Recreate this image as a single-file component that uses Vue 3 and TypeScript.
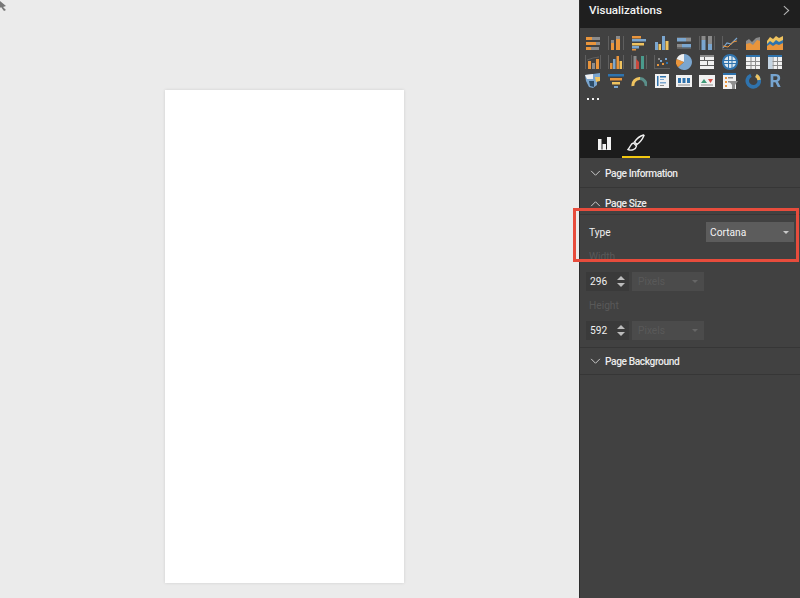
<script setup lang="ts">
interface Shape { d: string; fill: string; stroke: string; sw: number }
interface Icon { name: string; shapes: Shape[]; letter?: string }

const O = '#e9953c'
const B = '#7ba6cf'
const Y = '#efc35f'
const G = '#8b8b8b'
const D = '#5f5f5f'
const W = '#f1f1f1'
const N = '#2f73ad'

const r = (x: number, y: number, w: number, h: number, c: string): Shape => ({
  d: `M${x} ${y}h${w}v${h}h${-w}z`, fill: c, stroke: 'none', sw: 0,
})
const s = (d: string, c: string, sw = 1.2): Shape => ({ d, fill: 'none', stroke: c, sw })
const f = (d: string, c: string): Shape => ({ d, fill: c, stroke: 'none', sw: 0 })
const frame = (c = D): Shape[] => [r(0, 1, 1, 14, c), r(15, 1, 1, 14, c)]
const sheet: Shape = r(1, 1, 14, 14, W)
const gridLines = (top: string): Shape[] => [
  sheet, r(1, 1, 14, 2, top), r(5.5, 3, 1, 12, G), r(10, 3, 1, 12, G), r(1, 7, 14, 1, G), r(1, 11, 14, 1, G),
]

const icons: Icon[] = [
  { name: 'stacked bar', shapes: [r(1, 2, 6, 3, O), r(7, 2, 8, 3, G), r(1, 7, 10, 3, O), r(11, 7, 4, 3, G), r(1, 12, 5, 3, O), r(6, 12, 8, 3, G)] },
  { name: 'stacked column', shapes: [...frame(), r(3, 8, 3, 7, O), r(3, 5, 3, 3, G), r(8, 4, 4, 11, O), r(8, 1, 4, 3, G)] },
  { name: 'clustered bar', shapes: [r(1, 1, 9, 2.5, O), r(1, 4, 14, 2.5, B), r(1, 8, 12, 2.5, Y), r(1, 11, 7, 2.5, B), r(1, 14, 4, 1.5, O)] },
  { name: 'clustered column', shapes: [r(1, 7, 3, 8, B), r(4.5, 9, 2.5, 6, Y), r(8, 1, 3, 14, B), r(11.5, 6, 3, 9, Y)] },
  { name: '100% bar', shapes: [r(1, 2, 14, 1, D), r(1, 3, 9, 3.5, B), r(10, 3, 5, 3.5, G), r(1, 9, 5, 3.5, G), r(6, 9, 9, 3.5, B), r(1, 13, 14, 1, D)] },
  { name: '100% column', shapes: [...frame(), r(2.5, 1, 4, 4, G), r(2.5, 5, 4, 10, B), r(9, 1, 4, 8, G), r(9, 9, 4, 6, B)] },
  { name: 'line', shapes: [r(0, 1, 1, 14, D), r(0, 14, 16, 1, D), s('M1 13L5 8L9 9L15 3', B), s('M1 11L6 12L11 7L15 6', O, 1)] },
  { name: 'area', shapes: [f('M1 15V6L4 4L7 7L11 3L15 2V15z', G), f('M1 15V9L5 8L8 10L12 5L15 6V15z', O)] },
  { name: 'stacked area', shapes: [f('M0 6L3 2L6 4L9 1L12 3L16 1V9H0z', Y), f('M0 9L3 6L6 8L9 5L12 7L16 5V11H0z', N), f('M0 11L3 9L6 11L9 9L12 10L16 8V15H0z', O)] },

  { name: 'line and stacked', shapes: [...frame(), r(3, 7, 3, 8, O), r(7, 9, 3, 6, G), r(11, 5, 3, 10, O), s('M2 6L8 4L14 3', D, 1)] },
  { name: 'line and clustered', shapes: [...frame(), r(2, 9, 2.5, 6, O), r(5, 5, 2.5, 10, B), r(8.5, 2, 2.5, 13, O), r(11.5, 7, 2.5, 8, Y)] },
  { name: 'ribbon', shapes: [...frame(), r(2.5, 2, 3, 13, G), f('M5 5L8 8V15H5z', '#c9483c'), r(10, 2, 3, 13, '#4a9a8c')] },
  { name: 'scatter', shapes: [r(0, 1, 1, 14, D), r(0, 14, 16, 1, D), r(3, 10, 2, 2, O), r(6, 6, 2, 2, B), r(8, 9, 2, 2, O), r(11, 4, 2, 2, B), r(12, 8, 2, 2, N), r(4, 4, 2, 2, G)] },
  { name: 'pie', shapes: [f('M8 8V0A8 8 0 1 1 2 13.3z', B), f('M8 8L2 13.3A8 8 0 0 1 0.6 5z', O), f('M8 8L0.6 5A8 8 0 0 1 8 0z', W)] },
  { name: 'treemap', shapes: [sheet, r(1, 1, 14, 2, G), r(1, 6, 14, 1, D), r(8, 6, 1, 5, D), r(1, 11, 14, 1, D), r(5, 3, 1, 3, D)] },
  { name: 'globe', shapes: [f('M8 0a8 8 0 1 0 .01 0z', N), f('M8 2a6 6 0 1 0 .01 0z', '#d9e6ef'), r(2, 6, 12, 1, N), r(2, 9, 12, 1, N), r(6, 2, 1, 12, N), r(9.5, 2, 1, 12, N)] },
  { name: 'table', shapes: gridLines(N) },
  { name: 'matrix', shapes: [...gridLines(N), r(1, 3, 4.5, 12, '#c4d4e2')] },

  { name: 'filled map', shapes: [f('M0 2L8 1L15 0V5L12 7V12L8 15L4 14L1 8z', B), f('M0 2L8 1V6L2 6z', W), f('M4 8H9V14L5 13z', '#2c4c68'), f('M10 4H15V8L11 9z', Y)] },
  { name: 'funnel', shapes: [r(0, 1, 16, 2.5, N), r(2, 5, 12, 2.5, O), r(4, 9, 8, 2.5, Y), r(6, 13, 4, 2, B)] },
  { name: 'gauge', shapes: [s('M2 13A6.5 6.5 0 0 1 9 5.6', Y, 3), s('M9 5.6A6.5 6.5 0 0 1 15 13', '#5a8f8a', 3)] },
  { name: 'multi row card', shapes: [sheet, r(3, 3, 1.5, 10, N), r(6, 3, 6, 1.5, N), r(6, 6, 4, 1, B), r(6, 9, 6, 1.5, B), r(6, 12, 4, 1, G)] },
  { name: 'card', shapes: [r(0, 2, 16, 12, W), r(2, 5, 3, 5, N), r(6.5, 5, 3, 5, N), r(11, 5, 3, 5, N), r(2, 11.5, 12, 1, G)] },
  { name: 'kpi', shapes: [r(0, 2, 16, 12, W), f('M2 10L5 6L8 10z', '#3f9a78'), f('M9 6H14L11.5 10z', '#d24f45'), r(2, 11.5, 12, 1, G)] },
  { name: 'slicer', shapes: [r(1, 0, 13, 16, W), r(1, 0, 13, 2, N), r(3, 4, 2, 2, O), r(6, 4, 5, 1.5, G), r(3, 8, 2, 2, O), r(6, 8, 3, 1.5, G), r(3, 12, 2, 2, O), f('M7 8H16L13 12V16H10V12z', '#8f8f8f')] },
  { name: 'donut', shapes: [s('M10.8 2.4A6 6 0 1 1 6 2.3', N, 3.6), s('M11 2.5A6 6 0 0 1 14 7', Y, 3.2)] },
  { name: 'r script', shapes: [], letter: 'R' },
  { name: 'more', shapes: [r(2, 7, 2, 2, W), r(7, 7, 2, 2, W), r(12, 7, 2, 2, W)] },
]
</script>

<template>
  <div class="screen">
    <main class="canvas">
      <svg class="cursor" viewBox="0 0 8 11" width="8" height="11" aria-hidden="true">
        <path d="M0 1L6 6L3 7L6 10L4 11L1 7L0 8z" fill="#777" />
      </svg>
      <div class="page"></div>
    </main>

    <aside class="panel">
      <header class="title-bar">
        <span class="title">Visualizations</span>
        <svg viewBox="0 0 8 12" width="7" height="11" aria-hidden="true">
          <path d="M1 1L6.5 6L1 11" fill="none" stroke="#b5b5b5" stroke-width="1.2" />
        </svg>
      </header>

      <section class="gallery">
        <div v-for="icon in icons" :key="icon.name" class="tile" :title="icon.name">
          <span v-if="icon.letter" class="letter">{{ icon.letter }}</span>
          <svg v-else viewBox="0 0 16 16" width="16" height="16" aria-hidden="true">
            <path
              v-for="(p, i) in icon.shapes"
              :key="i"
              :d="p.d"
              :fill="p.fill"
              :stroke="p.stroke"
              :stroke-width="p.sw"
            />
          </svg>
        </div>
      </section>

      <nav class="tabs">
        <button class="tab" type="button" aria-label="Fields">
          <svg viewBox="0 0 13 13" width="13" height="13" aria-hidden="true">
            <path d="M0 2H3.500V13H0zM4.500 7H8V13H4.500zM9 0H13V13H9z" fill="#f2f2f2" />
            <path d="M0 12.500H13V13H0z" fill="#f2f2f2" />
          </svg>
        </button>
        <button class="tab active" type="button" aria-label="Format">
          <svg viewBox="0 0 18 18" width="18" height="18" aria-hidden="true">
            <path d="M16.500 1C13 2 9.500 5 7.500 8L10 10.500C13 8.500 15.500 5 17 1.500z" fill="none" stroke="#f2f2f2" stroke-width="1.400" />
            <path d="M6.500 9C3.500 9.500 3.500 13 1 15.500C4.500 17 9 15.500 9.500 12z" fill="none" stroke="#f2f2f2" stroke-width="1.400" />
          </svg>
        </button>
      </nav>

      <section class="section-head first">
        <svg class="chev" viewBox="0 0 12 8" width="11" height="7" aria-hidden="true">
          <path d="M1 1L6 6L11 1" fill="none" stroke="#cfcfcf" stroke-width="1.100" />
        </svg>
        <span>Page Information</span>
      </section>

      <section class="section-head open">
        <svg class="chev" viewBox="0 0 12 8" width="11" height="7" aria-hidden="true">
          <path d="M1 7L6 2L11 7" fill="none" stroke="#cfcfcf" stroke-width="1.100" />
        </svg>
        <span>Page Size</span>
      </section>

      <div class="type-row">
        <span>Type</span>
        <div class="select">
          <span>Cortana</span>
          <i class="caret"></i>
        </div>
      </div>

      <div class="label dim">Width</div>
      <div class="size-row">
        <div class="spin">
          <span class="num">296</span>
          <span class="arrows"><i class="up"></i><i class="down"></i></span>
        </div>
        <div class="unit"><span>Pixels</span><i class="caret off"></i></div>
      </div>

      <div class="label dim">Height</div>
      <div class="size-row">
        <div class="spin">
          <span class="num">592</span>
          <span class="arrows"><i class="up"></i><i class="down"></i></span>
        </div>
        <div class="unit"><span>Pixels</span><i class="caret off"></i></div>
      </div>

      <section class="section-head last">
        <svg class="chev" viewBox="0 0 12 8" width="11" height="7" aria-hidden="true">
          <path d="M1 1L6 6L11 1" fill="none" stroke="#cfcfcf" stroke-width="1.100" />
        </svg>
        <span>Page Background</span>
      </section>

      <div class="callout"></div>
    </aside>
  </div>
</template>

<style>
html, body { margin: 0; padding: 0; }
</style>

<style scoped>
.screen {
  display: flex;
  width: 800px;
  height: 598px;
  overflow: hidden;
  font-family: "Roboto", "Liberation Sans", sans-serif;
  background: #ebebeb;
}
.canvas {
  position: relative;
  flex: 0 0 579px;
  box-sizing: border-box;
  padding: 90px 175px 0 165px;
}
.cursor { position: absolute; left: 0; top: 0; }
.page {
  width: 239px;
  height: 493px;
  background: #fff;
  box-shadow: 0 0 3px rgba(0, 0, 0, 0.12);
}
.panel {
  position: relative;
  flex: 1;
  display: flex;
  flex-direction: column;
  background: #414141;
  border-left: 1px solid #2c2c2c;
  color: #f0f0f0;
  font-size: 10.2px;
}
.title-bar {
  height: 28px;
  box-sizing: border-box;
  padding: 0 10px 8px 9px;
  display: flex;
  align-items: center;
  justify-content: space-between;
  background: #1f1f1f;
}
.title {
  font-size: 11.6px;
  font-weight: 500;
  color: #f2f2f2;
}
.gallery {
  height: 102px;
  box-sizing: border-box;
  padding: 6px 0 0 2px;
  display: grid;
  grid-template-columns: repeat(9, 22.75px);
  grid-auto-rows: 18.7px;
  align-content: start;
  justify-items: center;
  align-items: center;
  filter: blur(0.35px);
}
.tile { width: 16px; height: 16px; display: flex; align-items: center; justify-content: center; }
.tile svg { display: block; }
.letter {
  font-size: 18px;
  line-height: 16px;
  font-weight: 700;
  color: #76a4cf;
}
.tabs {
  height: 28px;
  display: flex;
  align-items: stretch;
  padding-left: 10px;
  background: #1c1c1c;
  gap: 4px;
}
.tab {
  width: 28px;
  padding: 0;
  border: 0;
  border-bottom: 2px solid transparent;
  background: none;
  display: flex;
  align-items: center;
  justify-content: center;
}
.tab.active { border-bottom-color: #f2c811; }
.section-head {
  display: flex;
  align-items: center;
  gap: 4px;
  padding-left: 10px;
  box-sizing: border-box;
  font-size: 10.2px;
  font-weight: 500;
  letter-spacing: -0.4px;
  color: #ececec;
  border-bottom: 1px solid #363636;
}
.first { height: 30px; padding-top: 2px; }
.open { height: 27px; padding-top: 5px; }
.last { height: 28px; margin-top: 7px; border-top: 1px solid #363636; }
.type-row {
  height: 20px;
  margin-top: 7px;
  padding: 0 6px 0 9px;
  display: flex;
  align-items: center;
  justify-content: space-between;
  color: #eee;
}
.select {
  width: 88px;
  height: 20px;
  box-sizing: border-box;
  padding: 0 5px 0 4px;
  display: flex;
  align-items: center;
  justify-content: space-between;
  background: #5c5c5c;
  color: #f3f3f3;
}
.caret {
  width: 0;
  height: 0;
  border-left: 3px solid transparent;
  border-right: 3px solid transparent;
  border-top: 3px solid #c9c9c9;
}
.caret.off { border-top-color: #666; }
.label {
  height: 14px;
  margin-top: 8px;
  padding-left: 9px;
  line-height: 14px;
}
.dim { color: #595959; }
.size-row {
  margin-top: 8px;
  padding-left: 6px;
  display: flex;
  gap: 3px;
  height: 19px;
}
.spin {
  width: 43px;
  box-sizing: border-box;
  padding: 0 4px;
  display: flex;
  align-items: center;
  justify-content: space-between;
  background: #3a3a3a;
}
.num { color: #f0f0f0; }
.arrows { display: flex; flex-direction: column; gap: 3px; }
.up, .down {
  display: block;
  width: 0;
  height: 0;
  border-left: 4px solid transparent;
  border-right: 4px solid transparent;
}
.up { border-bottom: 4px solid #bcbcbc; }
.down { border-top: 4px solid #bcbcbc; }
.unit {
  width: 72px;
  box-sizing: border-box;
  padding: 0 6px;
  display: flex;
  align-items: center;
  justify-content: space-between;
  background: #4b4b4b;
  color: #595959;
}
.callout {
  position: absolute;
  left: -7px;
  top: 208px;
  width: 226px;
  height: 54px;
  box-sizing: border-box;
  border: 3px solid #e74c3c;
}
</style>
